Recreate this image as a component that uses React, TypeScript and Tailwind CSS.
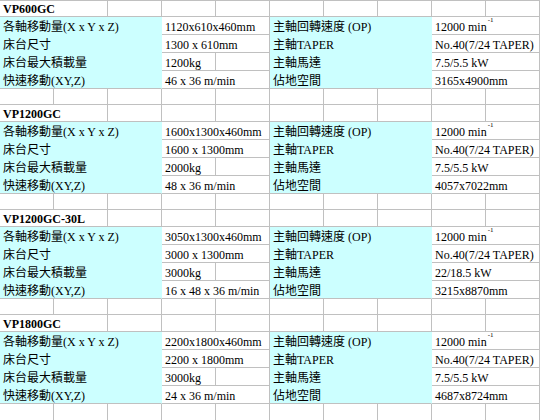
import React from "react"

type Row = [string, string, string, string]

const blocks: { name: string; rows: Row[] }[] = [
    {
        name: "VP600GC",
        rows: [
            ["各軸移動量(X x Y x Z)", "1120x610x460mm", "主軸回轉速度 (OP)", "12000 min"],
            ["床台尺寸", "1300 x 610mm", "主軸TAPER", "No.40(7/24 TAPER)"],
            ["床台最大積載量", "1200kg", "主軸馬達", "7.5/5.5 kW"],
            ["快速移動(XY,Z)", "46 x 36 m/min", "佔地空間", "3165x4900mm"],
        ],
    },
    {
        name: "VP1200GC",
        rows: [
            ["各軸移動量(X x Y x Z)", "1600x1300x460mm", "主軸回轉速度 (OP)", "12000 min"],
            ["床台尺寸", "1600 x 1300mm", "主軸TAPER", "No.40(7/24 TAPER)"],
            ["床台最大積載量", "2000kg", "主軸馬達", "7.5/5.5 kW"],
            ["快速移動(XY,Z)", "48 x 36 m/min", "佔地空間", "4057x7022mm"],
        ],
    },
    {
        name: "VP1200GC-30L",
        rows: [
            ["各軸移動量(X x Y x Z)", "3050x1300x460mm", "主軸回轉速度 (OP)", "12000 min"],
            ["床台尺寸", "3000 x 1300mm", "主軸TAPER", "No.40(7/24 TAPER)"],
            ["床台最大積載量", "3000kg", "主軸馬達", "22/18.5 kW"],
            ["快速移動(XY,Z)", "16 x 48 x 36 m/min", "佔地空間", "3215x8870mm"],
        ],
    },
    {
        name: "VP1800GC",
        rows: [
            ["各軸移動量(X x Y x Z)", "2200x1800x460mm", "主軸回轉速度 (OP)", "12000 min"],
            ["床台尺寸", "2200 x 1800mm", "主軸TAPER", "No.40(7/24 TAPER)"],
            ["床台最大積載量", "3000kg", "主軸馬達", "7.5/5.5 kW"],
            ["快速移動(XY,Z)", "24 x 36 m/min", "佔地空間", "4687x8724mm"],
        ],
    },
]

const cell = "border-r border-b border-[#c0c0c0] flex items-end pl-[3px] pb-[1px] whitespace-nowrap overflow-visible"

function Blank({ h }: { h: string }) {
    return (
        <>
            {Array.from({ length: 10 }).map((_, i) => (
                <div key={i} className={`${cell} ${h}`} />
            ))}
        </>
    )
}

export default function App() {
    return (
        <div
            className="w-[540px] h-[420px] overflow-hidden bg-white text-black text-[12px] leading-none border-t border-[#c0c0c0]"
            style={{ fontFamily: '"Liberation Serif", "Noto Sans CJK TC", serif' }}
        >
            <div className="grid grid-cols-[repeat(10,54px)] -mt-px">
                {blocks.map((b, bi) => (
                    <React.Fragment key={b.name}>
                        {/* model name row */}
                        <div className={`${cell} col-span-2 h-[17px] font-bold`}>{b.name}</div>
                        {Array.from({ length: 8 }).map((_, i) => (
                            <div key={i} className={`${cell} h-[17px]`} />
                        ))}

                        {b.rows.map((r, ri) => {
                            const last = ri === b.rows.length - 1
                            const cyan = `${cell} h-[18px] bg-[#ccffff] border-r-[#ccffff] ${last ? "" : "border-b-[#ccffff]"
                                }`
                            const isKg = r[1].endsWith("kg")
                            return (
                                <React.Fragment key={ri}>
                                    <div className={`${cyan} col-span-3`}>{r[0]}</div>
                                    {isKg ? (
                                        <>
                                            <div className={`${cell} h-[18px]`}>{r[1]}</div>
                                            <div className={`${cell} h-[18px]`} />
                                        </>
                                    ) : (
                                        <div className={`${cell} col-span-2 h-[18px]`}>{r[1]}</div>
                                    )}
                                    <div className={`${cyan} col-span-3`}>{r[2]}</div>
                                    <div className={`${cell} col-span-2 h-[18px]`}>
                                        {r[3]}
                                        {ri === 0 && (
                                            <sup className="text-[7px] leading-none self-start mt-[3px] ml-[1px]">-1</sup>
                                        )}
                                    </div>
                                </React.Fragment>
                            )
                        })}

                        <Blank h={bi === blocks.length - 1 ? "h-[17px]" : "h-[16px]"} />
                    </React.Fragment>
                ))}
            </div>
        </div>
    )
}
